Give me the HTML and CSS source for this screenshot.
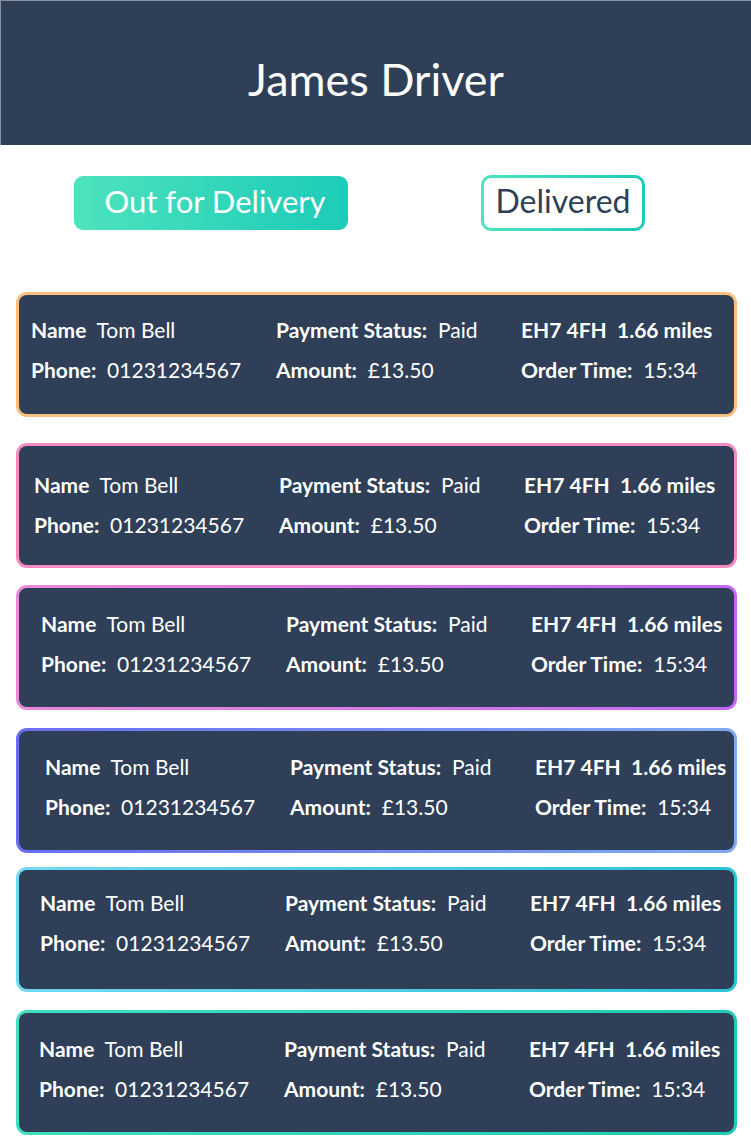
FILE: index.html
```html
<!DOCTYPE html>
<html lang="en">
<head>
<meta charset="utf-8">
<title>James Driver</title>
<link rel="stylesheet" href="styles.css">
</head>
<body>
<header class="header"><h1 class="title">James Driver</h1></header>
<nav class="tabs">
  <button class="tab tab-active">Out for Delivery</button>
  <button class="tab tab-outline">Delivered</button>
</nav>
<main class="orders">
  <div class="card c1">
    <div class="grid">
      <div><b>Name</b>&nbsp; Tom Bell</div>
      <div><b>Payment Status:</b>&nbsp; Paid</div>
      <div><b>EH7 4FH&nbsp; 1.66 miles</b></div>
      <div><b>Phone:</b>&nbsp; 01231234567</div>
      <div><b>Amount:</b>&nbsp; £13.50</div>
      <div><b>Order Time:</b>&nbsp; 15:34</div>
    </div>
  </div>
  <div class="card c2">
    <div class="grid">
      <div><b>Name</b>&nbsp; Tom Bell</div>
      <div><b>Payment Status:</b>&nbsp; Paid</div>
      <div><b>EH7 4FH&nbsp; 1.66 miles</b></div>
      <div><b>Phone:</b>&nbsp; 01231234567</div>
      <div><b>Amount:</b>&nbsp; £13.50</div>
      <div><b>Order Time:</b>&nbsp; 15:34</div>
    </div>
  </div>
  <div class="card c3">
    <div class="grid">
      <div><b>Name</b>&nbsp; Tom Bell</div>
      <div><b>Payment Status:</b>&nbsp; Paid</div>
      <div><b>EH7 4FH&nbsp; 1.66 miles</b></div>
      <div><b>Phone:</b>&nbsp; 01231234567</div>
      <div><b>Amount:</b>&nbsp; £13.50</div>
      <div><b>Order Time:</b>&nbsp; 15:34</div>
    </div>
  </div>
  <div class="card c4">
    <div class="grid">
      <div><b>Name</b>&nbsp; Tom Bell</div>
      <div><b>Payment Status:</b>&nbsp; Paid</div>
      <div><b>EH7 4FH&nbsp; 1.66 miles</b></div>
      <div><b>Phone:</b>&nbsp; 01231234567</div>
      <div><b>Amount:</b>&nbsp; £13.50</div>
      <div><b>Order Time:</b>&nbsp; 15:34</div>
    </div>
  </div>
  <div class="card c5">
    <div class="grid">
      <div><b>Name</b>&nbsp; Tom Bell</div>
      <div><b>Payment Status:</b>&nbsp; Paid</div>
      <div><b>EH7 4FH&nbsp; 1.66 miles</b></div>
      <div><b>Phone:</b>&nbsp; 01231234567</div>
      <div><b>Amount:</b>&nbsp; £13.50</div>
      <div><b>Order Time:</b>&nbsp; 15:34</div>
    </div>
  </div>
  <div class="card c6">
    <div class="grid">
      <div><b>Name</b>&nbsp; Tom Bell</div>
      <div><b>Payment Status:</b>&nbsp; Paid</div>
      <div><b>EH7 4FH&nbsp; 1.66 miles</b></div>
      <div><b>Phone:</b>&nbsp; 01231234567</div>
      <div><b>Amount:</b>&nbsp; £13.50</div>
      <div><b>Order Time:</b>&nbsp; 15:34</div>
    </div>
  </div>
</main>
</body>
</html>
```

FILE: styles.css
```css
* { box-sizing: border-box; }
html, body { margin: 0; padding: 0; background: #fff; }
body { font-family: Lato, "Open Sans", sans-serif; width: 751px; overflow: hidden; }

.header {
  height: 145px;
  background: #2e3f57;
  border-top: 1px solid #8a929e;
  border-left: 1px solid #8a929e;
  display: flex;
  align-items: center;
  justify-content: center;
}
.title {
  margin: 0;
  padding-top: 12px;
  color: #fff;
  font-weight: 400;
  font-size: 45px;
  letter-spacing: 0;
}

.tabs {
  display: flex;
  align-items: center;
  padding: 30px 0 0 74px;
  gap: 133px;
}
.tab {
  font-family: Lato, "Open Sans", sans-serif;
  font-size: 32px;
  font-weight: 400;
  cursor: pointer;
  padding: 0 0 5px 0;
}
.tab-active {
  width: 274px;
  height: 54px;
  border: none;
  border-radius: 9px;
  color: #fff;
  font-size: 31px;
  padding-left: 8px;
  background: linear-gradient(90deg, #4de3bd, #1ccbb8);
}
.tab-outline {
  width: 164px;
  height: 56px;
  border: 3px solid transparent;
  border-radius: 10px;
  color: #2e3f57;
  background: linear-gradient(#fff, #fff) padding-box, linear-gradient(90deg, #4de3c0, #1ccbb8) border-box;
}

.orders {
  display: flex;
  flex-direction: column;
  padding: 61px 14px 0 16px;
}
.card {
  height: 125px;
  border: 3px solid transparent;
  border-radius: 11px;
  color: #fff;
  padding: 22px 0 0 12px;
}
.grid {
  display: grid;
  grid-template-columns: 245px 245px auto;
  row-gap: 15px;
  font-size: 21px;
  line-height: 25px;
  white-space: nowrap;
}
.grid b { font-weight: 700; }

.c1 {
  background: linear-gradient(#2e3f57, #2e3f57) padding-box, linear-gradient(90deg, #fbc07e, #fbc07e) border-box;
}
.c2 {
  margin-top: 26px;
  padding-left: 15px;
  padding-top: 26px;
  background: linear-gradient(#2e3f57, #2e3f57) padding-box, linear-gradient(90deg, #f58bbf, #f58bbf) border-box;
}
.c3 {
  margin-top: 17px;
  padding-left: 22px;
  padding-top: 23px;
  background: linear-gradient(#2e3f57, #2e3f57) padding-box, linear-gradient(90deg, #eb8ad8, #c566f7) border-box;
}
.c4 {
  margin-top: 18px;
  padding-left: 26px;
  padding-top: 23px;
  background: linear-gradient(#2e3f57, #2e3f57) padding-box, linear-gradient(90deg, #6a6ef2, #80aaf2) border-box;
}
.c5 {
  margin-top: 14px;
  padding-left: 21px;
  padding-top: 20px;
  background: linear-gradient(#2e3f57, #2e3f57) padding-box, linear-gradient(90deg, #72d9f4, #2bc2d6) border-box;
}
.c6 {
  margin-top: 18px;
  padding-left: 20px;
  padding-top: 23px;
  background: linear-gradient(#2e3f57, #2e3f57) padding-box, linear-gradient(90deg, #40e0c0, #1fcbb3) border-box;
}
```
